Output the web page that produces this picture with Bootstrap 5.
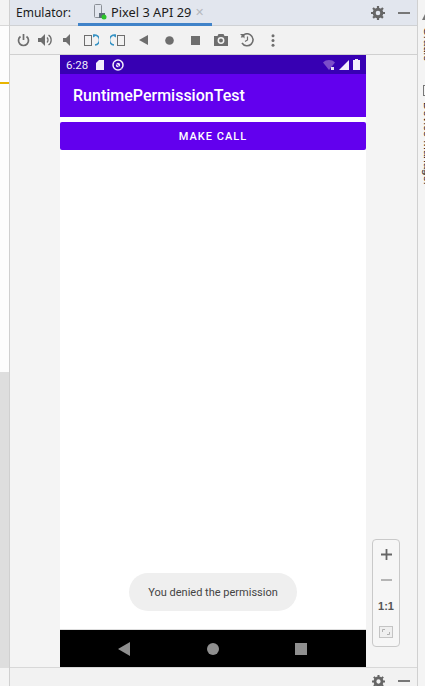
<!DOCTYPE html>
<html lang="en">
<head>
  <meta charset="UTF-8">
  <meta name="viewport" content="width=device-width, initial-scale=1.0">
  <title>Emulator - RuntimePermissionTest</title>
  <link href="https://cdn.jsdelivr.net/npm/bootstrap@5.3.0/dist/css/bootstrap.min.css" rel="stylesheet">
  <style>
    html, body { height: 686px; overflow: hidden; }
    body { background: #f4f4f4; font-family: "Liberation Sans", Arial, sans-serif; }
    .ide { width: 425px; height: 686px; }

    /* left tool strip */
    .left-strip { width: 10px; background: #f4f4f4; border-right: 1px solid #d0d0d0; }
    .strip-head { height: 26px; background: #f3f3f3; border-bottom: 1px solid #d8d8d8; }
    .strip-top { height: 346px; background: #fdfdfd; }
    .strip-mark { height: 2px; margin-top: 56px; background: #e8b400; }
    .strip-low { background: #dedede; margin-bottom: 18px; }

    /* right tool strip */
    .right-strip { width: 8px; border-left: 1px solid #d0d0d0; overflow: hidden; }
    .side-tri { margin: 12px 0 0 4px; display: block; }
    .side-label { writing-mode: vertical-rl; font: 11.5px/11px "Liberation Sans", sans-serif; color: #222; white-space: nowrap; margin-left: 4px; }
    .side-gradle { margin-top: 7px; }
    .side-box { width: 9px; height: 11px; border: 1px solid #777; margin: 23px 0 6px 5px; }

    /* tab row */
    .tab-row { height: 26px; background: #e2e6ee; border-bottom: 1px solid #cfd1d4; padding-left: 6px; }
    .emu-label { font: 12px "Noto Sans", sans-serif; color: #1c1c1c; width: 62px; }
    .pixel-tab { height: 25px; width: 134px; padding-left: 16px; border-bottom: 3px solid #4083c9; font: 12.8px "Noto Sans", sans-serif; color: #1c1c1c; margin-top: 1px; }
    .tab-x { color: #b5b8bd; font-size: 11px; line-height: 1; }
    .win-btns { gap: 13px; padding-right: 7px; }

    /* emulator toolbar */
    .tool-row { height: 29px; background: #f2f2f2; border-bottom: 1px solid #d0d0d0; padding-left: 2px; }
    .tool-btn { width: 26px; }
    .tool-sm { width: 22px; }

    /* device */
    .work-area { position: relative; }
    .phone { width: 306px; margin-left: 50px; background: #fff; height: 612px; }
    .status-row { height: 19px; background: #3700b3; color: #f2eefc; font: 11.5px Roboto, sans-serif; padding: 0 6px; }
    .app-row { height: 43px; background: #6200ee; color: #fff; font: 500 16px Roboto, sans-serif; padding-left: 13px; }
    .call-btn { height: 28px; margin-top: 5px; background: #6200ee; color: #fff; border: 0; border-radius: 2px; font: 500 11px Roboto, sans-serif; letter-spacing: 1px; }
    .call-btn:hover { background: #6200ee; color: #fff; }
    .nav-row { height: 38px; background: #000; border-top: 1px solid #ddd; padding: 0 59px 0 58px; }
    .toast-msg { position: absolute; left: 119px; top: 518px; width: 168px; height: 38px; border-radius: 19px; background: #efefef; color: #444; font: 11px Roboto, sans-serif; }

    /* zoom panel */
    .zoom-panel { position: absolute; left: 362px; top: 484px; width: 28px; height: 108px; background: #f6f6f6; border: 1px solid #c9c9c9; border-radius: 4px; padding-top: 1px; }
    .zoom-cell { height: 26px; color: #555; font: 700 11px "Liberation Sans", sans-serif; }

    /* bottom bar */
    .foot-row { height: 19px; background: #f2f2f2; border-top: 1px solid #d8d8d8; padding: 8px 7px 0 0; gap: 13px; }
  </style>
</head>
<body>
  <div class="ide d-flex">
    <div class="left-strip d-flex flex-column flex-shrink-0">
      <div class="strip-head"></div>
      <div class="strip-top"><div class="strip-mark"></div></div>
      <div class="strip-low flex-grow-1"></div>
    </div>

    <div class="flex-grow-1 d-flex flex-column">
      <div class="tab-row d-flex align-items-center">
        <div class="emu-label">Emulator:</div>
        <div class="pixel-tab d-flex align-items-center gap-1">
          <svg width="13" height="16" viewBox="0 0 13 16"><rect x=".5" y=".5" width="7" height="13" rx="1" fill="none" stroke="#8a8f96"/><rect x="5" y="9" width="6" height="5" fill="#5d6b78"/><circle cx="10" cy="13" r="2.5" fill="#2cc52c"/></svg>
          <span>Pixel 3 API 29</span>
          <span class="tab-x">&#10005;</span>
        </div>
        <div class="win-btns ms-auto d-flex align-items-center">
          <svg width="14" height="14" viewBox="0 0 14 14"><circle cx="7" cy="7" r="3.8" fill="none" stroke="#666" stroke-width="3"/><path d="M7 0v14M0 7h14M2 2l10 10M12 2 2 12" stroke="#666" stroke-width="2.2" stroke-dasharray="2.4 9.2 2.4"/></svg>
          <svg width="12" height="2" viewBox="0 0 12 2"><rect width="12" height="2" fill="#777"/></svg>
        </div>
      </div>

      <div class="tool-row d-flex align-items-center">
        <span class="tool-sm d-flex justify-content-center"><svg width="13" height="14" viewBox="0 0 13 14"><path d="M3.500 3.500a5 5 0 1 0 6 0" fill="none" stroke="#6e6e6e" stroke-width="1.700"/><path d="M6.500 1v6" stroke="#6e6e6e" stroke-width="1.700"/></svg></span>
        <span class="tool-sm d-flex justify-content-center"><svg width="14" height="12" viewBox="0 0 14 12"><path d="M0 4h3l4-4v12L3 8H0z" fill="#6e6e6e"/><path d="M9 3.500a3.500 3.500 0 0 1 0 5M10.500 1a6 6 0 0 1 0 10" fill="none" stroke="#6e6e6e" stroke-width="1.300"/></svg></span>
        <span class="tool-sm d-flex justify-content-center"><svg width="11" height="12" viewBox="0 0 11 12"><path d="M1 4h3l4-4v12L4 8H1z" fill="#6e6e6e"/></svg></span>
        <span class="tool-btn d-flex justify-content-center"><svg width="15" height="13" viewBox="0 0 15 13"><rect x=".5" y="1.500" width="7" height="10" fill="none" stroke="#6e6e6e"/><path d="M10 1a5 5 0 0 1 1 10" fill="none" stroke="#3592c4" stroke-width="1.600"/><path d="M9 0v3.500l3-1.700z" fill="#3592c4"/></svg></span>
        <span class="tool-btn d-flex justify-content-center"><svg width="15" height="13" viewBox="0 0 15 13"><rect x="7.500" y="1.500" width="7" height="10" fill="none" stroke="#6e6e6e"/><path d="M5 1a5 5 0 0 0-1 10" fill="none" stroke="#3592c4" stroke-width="1.600"/><path d="M6 0v3.500L3 1.800z" fill="#3592c4"/></svg></span>
        <span class="tool-btn d-flex justify-content-center"><svg width="9" height="10" viewBox="0 0 9 10"><path d="M9 0v10L0 5z" fill="#6e6e6e"/></svg></span>
        <span class="tool-btn d-flex justify-content-center"><svg width="9" height="9" viewBox="0 0 9 9"><circle cx="4.500" cy="4.500" r="4.300" fill="#6e6e6e"/></svg></span>
        <span class="tool-btn d-flex justify-content-center"><svg width="9" height="9" viewBox="0 0 9 9"><rect width="9" height="9" fill="#6e6e6e"/></svg></span>
        <span class="tool-btn d-flex justify-content-center"><svg width="14" height="12" viewBox="0 0 14 12"><path d="M0 2h3.500l1-2h5l1 2H14v10H0z" fill="#6e6e6e"/><circle cx="7" cy="6.500" r="2.700" fill="none" stroke="#f2f2f2" stroke-width="1.500"/></svg></span>
        <span class="tool-btn d-flex justify-content-center"><svg width="14" height="14" viewBox="0 0 14 14"><path d="M1.500 4.500A6 6 0 1 1 2 10" fill="none" stroke="#6e6e6e" stroke-width="1.600"/><path d="M0 1h4.500v4.500z" fill="#6e6e6e"/><path d="M7.500 3.500V7L5 8.500" fill="none" stroke="#6e6e6e" stroke-width="1.200"/></svg></span>
        <span class="tool-btn d-flex justify-content-center"><svg width="4" height="13" viewBox="0 0 4 13"><circle cx="2" cy="1.700" r="1.500" fill="#6e6e6e"/><circle cx="2" cy="6.500" r="1.500" fill="#6e6e6e"/><circle cx="2" cy="11.300" r="1.500" fill="#6e6e6e"/></svg></span>
      </div>

      <div class="work-area flex-grow-1">
        <div class="phone d-flex flex-column">
          <div class="status-row d-flex align-items-center flex-shrink-0">
            <span>6:28</span>
            <svg class="ms-2" width="8" height="10" viewBox="0 0 8 10"><path d="M3 0h5v10H0V3z" fill="#f2eefc"/></svg>
            <svg class="ms-2" width="12" height="12" viewBox="0 0 12 12"><circle cx="6" cy="6" r="5" fill="none" stroke="#f2eefc" stroke-width="1.500"/><circle cx="6" cy="6" r="2.200" fill="#f2eefc"/><path d="M2.500 3 9 9.500" stroke="#3700b3" stroke-width="1"/></svg>
            <svg class="ms-auto" width="12" height="10" viewBox="0 0 12 10"><path d="M0 2.500C3-.8 9-.8 12 2.500L6 10z" fill="#7b4dc9"/><rect x="8" y="7" width="3" height="3" fill="#e6e0f5"/></svg>
            <svg class="ms-1" width="10" height="10" viewBox="0 0 10 10"><path d="M10 0v10H0z" fill="#f2eefc"/></svg>
            <svg class="ms-1" width="7" height="11" viewBox="0 0 7 11"><path d="M2 0h3v1h2v10H0V1h2z" fill="#f2eefc"/></svg>
          </div>
          <div class="app-row d-flex align-items-center flex-shrink-0">RuntimePermissionTest</div>
          <button class="btn call-btn w-100 p-0 flex-shrink-0" type="button">MAKE CALL</button>
          <div class="flex-grow-1"></div>
          <div class="nav-row d-flex align-items-center justify-content-between flex-shrink-0">
            <svg width="12" height="14" viewBox="0 0 12 14"><path d="M12 0v14L0 7z" fill="#8f8f8f"/></svg>
            <svg width="12" height="12" viewBox="0 0 12 12"><circle cx="6" cy="6" r="6" fill="#8f8f8f"/></svg>
            <svg width="12" height="12" viewBox="0 0 12 12"><rect width="12" height="12" fill="#8f8f8f"/></svg>
          </div>
        </div>

        <div class="toast-msg d-flex align-items-center justify-content-center">You denied the permission</div>

        <div class="zoom-panel d-flex flex-column align-items-center">
          <div class="zoom-cell d-flex align-items-center"><svg width="11" height="11" viewBox="0 0 11 11"><path d="M5.500 0v11M0 5.500h11" stroke="#666" stroke-width="1.800"/></svg></div>
          <div class="zoom-cell d-flex align-items-center"><svg width="11" height="2" viewBox="0 0 11 2"><rect width="11" height="2" fill="#b5b5b5"/></svg></div>
          <div class="zoom-cell d-flex align-items-center">1:1</div>
          <div class="zoom-cell d-flex align-items-center"><svg width="14" height="12" viewBox="0 0 14 12"><rect x=".5" y=".5" width="13" height="11" fill="#efefef" stroke="#c4c4c4"/><path d="M6 3.500H3.500V6M8 8.500h2.500V6" fill="none" stroke="#b0b0b0"/></svg></div>
        </div>
      </div>

      <div class="foot-row d-flex align-items-center justify-content-end">
        <svg width="13" height="13" viewBox="0 0 14 14"><circle cx="7" cy="7" r="3.800" fill="none" stroke="#666" stroke-width="3"/><path d="M7 0v14M0 7h14M2 2l10 10M12 2 2 12" stroke="#666" stroke-width="2.200" stroke-dasharray="2.400 9.200 2.400"/></svg>
        <svg width="12" height="2" viewBox="0 0 12 2"><rect width="12" height="2" fill="#777"/></svg>
      </div>
    </div>

    <div class="right-strip flex-shrink-0">
      <svg class="side-tri" width="4" height="8" viewBox="0 0 4 8"><path d="M4 0v8H0z" fill="#777"/></svg>
      <div class="side-label side-gradle">Gradle</div>
      <div class="side-box"></div>
      <div class="side-label">Device Manager</div>
    </div>
  </div>

  <script src="https://cdn.jsdelivr.net/npm/bootstrap@5.3.0/dist/js/bootstrap.bundle.min.js"></script>
</body>
</html>
